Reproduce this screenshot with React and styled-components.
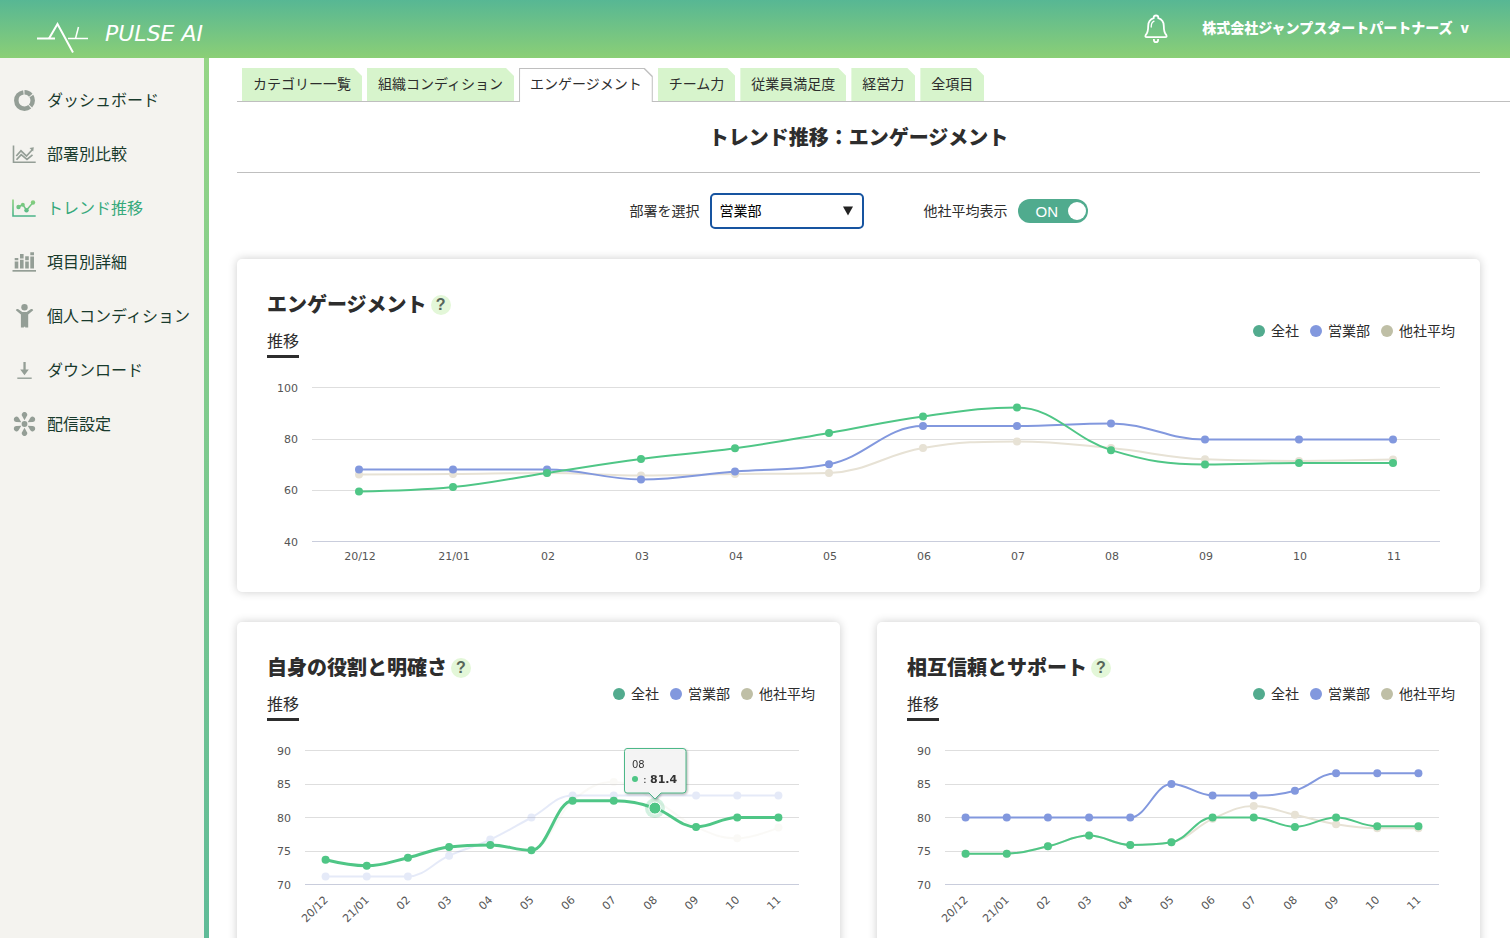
import React, { useLayoutEffect, useRef, useState } from "react";
import styled, { createGlobalStyle, css } from "styled-components";

const months = ["20/12", "21/01", "02", "03", "04", "05", "06", "07", "08", "09", "10", "11"];

const seriesColors = {
  average: "#e7e2d5",
  department: "#8298de",
  company: "#4fc686",
};

const legendItems = [
  { label: "全社", color: "#52ab8e" },
  { label: "営業部", color: "#8298de" },
  { label: "他社平均", color: "#bfbfa6" },
];

const engagement = {
  average: [66.1, 66.3, 66.7, 65.7, 66.3, 66.7, 76.4, 79, 76.4, 72, 71.4, 71.9],
  department: [68.1, 68.1, 68.1, 64.2, 67.3, 70.1, 85, 85, 86, 79.7, 79.7, 79.7],
  company: [59.5, 61.2, 66.7, 72.1, 76.3, 82.3, 88.7, 92.2, 75.6, 70, 70.6, 70.6],
};

const roleClarity = {
  average: [73.7, 72.8, 74, 75.6, 75.9, 75.1, 82.5, 85.3, 82.6, 78.6, 76.9, 78.5],
  department: [71.2, 71.2, 71.2, 74.3, 76.7, 80, 83.3, 83.3, 83.3, 83.3, 83.3, 83.3],
  company: [73.7, 72.8, 74, 75.6, 75.9, 75.1, 82.5, 82.5, 81.4, 78.6, 80, 80],
};

const mutualTrust = {
  average: [74.6, 74.6, 75.7, 77.3, 75.9, 76.3, 79.8, 81.7, 80.4, 79, 78.4, 78.4],
  department: [80, 80, 80, 80, 80, 85, 83.3, 83.3, 84, 86.6, 86.6, 86.6],
  company: [74.6, 74.6, 75.7, 77.3, 75.9, 76.3, 80, 80, 78.6, 80, 78.7, 78.7],
};

const tabs = [
  "カテゴリー一覧",
  "組織コンディション",
  "エンゲージメント",
  "チーム力",
  "従業員満足度",
  "経営力",
  "全項目",
];

// smooth curve that never overshoots a local maximum or minimum
const splinePath = (points) => {
  let d = `M${points[0].x} ${points[0].y}`;
  let prevRight = points[0];
  for (let i = 1; i < points.length; i++) {
    const last = points[i - 1];
    const point = points[i];
    const next = points[i + 1];
    let left = point;
    let right = point;
    if (next) {
      const leftX = (1.5 * point.x + last.x) / 2.5;
      let leftY = (1.5 * point.y + last.y) / 2.5;
      const rightX = (1.5 * point.x + next.x) / 2.5;
      let rightY = (1.5 * point.y + next.y) / 2.5;
      const correction =
        ((rightY - leftY) * (rightX - point.x)) / (rightX - leftX) + point.y - rightY;
      leftY += correction;
      rightY += correction;
      if (leftY > last.y && leftY > point.y) {
        leftY = Math.max(last.y, point.y);
        rightY = 2 * point.y - leftY;
      } else if (leftY < last.y && leftY < point.y) {
        leftY = Math.min(last.y, point.y);
        rightY = 2 * point.y - leftY;
      }
      if (rightY > next.y && rightY > point.y) {
        rightY = Math.max(next.y, point.y);
        leftY = 2 * point.y - rightY;
      } else if (rightY < next.y && rightY < point.y) {
        rightY = Math.min(next.y, point.y);
        leftY = 2 * point.y - rightY;
      }
      left = { x: leftX, y: leftY };
      right = { x: rightX, y: rightY };
    }
    d += ` C${prevRight.x} ${prevRight.y} ${left.x} ${left.y} ${point.x} ${point.y}`;
    prevRight = right;
  }
  return d;
};

const TrendChart = ({ data, min, max, step, plotHeight, plotLeft, rotated, active }) => {
  const ref = useRef(null);
  const [width, setWidth] = useState(500);

  useLayoutEffect(() => {
    const update = () => setWidth(ref.current.clientWidth);
    update();
    const observer = new ResizeObserver(update);
    observer.observe(ref.current);
    return () => observer.disconnect();
  }, []);

  const top = 19.5;
  const bottom = top + plotHeight;
  const plotRight = width - (rotated ? 11 : 10);
  const slot = (plotRight - plotLeft) / months.length;
  const xOf = (i) => plotLeft + slot * (i + 0.5);
  const yOf = (v) => bottom - ((v - min) / (max - min)) * plotHeight;
  const ticks = [];
  for (let v = min; v <= max; v += step) ticks.push(v);

  const hoverX = active ? xOf(active.index) : 0;
  const hoverY = active ? yOf(data[active.series][active.index]) : 0;

  return (
    <ChartBox ref={ref}>
      <ChartSvg viewBox={`0 0 ${width} 204`} width={width} height={204}>
        {ticks.map((v) => {
          const y = Math.round(yOf(v) - 0.01) + 0.5;
          return (
            <g key={v}>
              <path
                d={`M${plotLeft} ${y}H${plotRight}`}
                stroke={v === min ? "#c9cddc" : "#dedede"}
              />
              <AxisText x={plotLeft - 14} y={yOf(v) + 4} textAnchor="end">
                {v}
              </AxisText>
            </g>
          );
        })}
        {months.map((m, i) =>
          rotated ? (
            <AxisText
              key={m}
              textAnchor="end"
              transform={`translate(${xOf(i) + 3} ${bottom + 16}) rotate(-45)`}
            >
              {m}
            </AxisText>
          ) : (
            <AxisText key={m} x={xOf(i) + 1} y={bottom + 18} textAnchor="middle">
              {m}
            </AxisText>
          )
        )}
        {Object.keys(seriesColors).map((name) => {
          const points = data[name].map((v, i) => ({ x: xOf(i), y: yOf(v) }));
          const highlighted = active && active.series === name;
          return (
            <g key={name} opacity={active && !highlighted ? 0.2 : 1}>
              <path
                d={splinePath(points)}
                fill="none"
                stroke={seriesColors[name]}
                strokeWidth={highlighted ? 3 : 2}
                strokeLinecap="round"
              />
              {points.map((p, i) => (
                <circle key={i} cx={p.x} cy={p.y} r="4" fill={seriesColors[name]} />
              ))}
            </g>
          );
        })}
        {active && (
          <g>
            <circle cx={hoverX} cy={hoverY} r="10" fill="#4fc686" opacity="0.25" />
            <circle cx={hoverX} cy={hoverY} r="6" fill="#4fc686" stroke="#fff" />
            <Tooltip transform={`translate(${Math.round(hoverX) - 31} ${Math.round(hoverY) - 60})`}>
              <path
                d="M3 .5H59Q62 .5 62 3.500V42Q62 45 59 45H37L31 51L25 45H3Q.5 45 .5 42V3.500Q.5 .5 3 .5Z"
                fill="#f7f7f7"
                fillOpacity="0.95"
                stroke="#4cb888"
              />
              <AxisText x="8" y="20" $dark>
                {months[active.index]}
              </AxisText>
              <circle cx="11" cy="31" r="3" fill="#4fc686" />
              <TipText x="19" y="35">
                :
              </TipText>
              <TipText x="26" y="35" $bold>
                {data[active.series][active.index]}
              </TipText>
            </Tooltip>
          </g>
        )}
      </ChartSvg>
    </ChartBox>
  );
};

const ChartCard = ({ title, ...chart }) => (
  <Card>
    <CardTitle>
      {title}
      <HelpButton type="button" aria-label="ヘルプ">
        ?
      </HelpButton>
    </CardTitle>
    <CardBar>
      <SubTitle>推移</SubTitle>
      <Legend>
        {legendItems.map((item) => (
          <LegendItem key={item.label}>
            <LegendDot $color={item.color} />
            {item.label}
          </LegendItem>
        ))}
      </Legend>
    </CardBar>
    <TrendChart {...chart} />
  </Card>
);

const DonutIcon = () => (
  <Icon viewBox="0 0 24 24">
    <g fill="none" stroke="currentColor" strokeWidth="4.500" transform="rotate(-90 12.500 12.500)">
      <circle cx="12.500" cy="12.500" r="8.200" pathLength="360" strokeDasharray="50 310" />
      <circle
        cx="12.500"
        cy="12.500"
        r="8.200"
        pathLength="360"
        strokeDasharray="76 284"
        strokeDashoffset="-57"
      />
      <circle
        cx="12.500"
        cy="12.500"
        r="8.200"
        pathLength="360"
        strokeDasharray="212 148"
        strokeDashoffset="-140"
      />
    </g>
  </Icon>
);

const CompareIcon = () => (
  <Icon viewBox="0 0 24 24" fill="none" stroke="currentColor">
    <path d="M1.500 3.500V20.300H23.700" strokeWidth="1.600" />
    <path d="M4.300 14L9 8.800L14.500 14L20.500 7.500" strokeWidth="1.700" />
    <path d="M4.500 17.800L9.200 12.600L15 17.300L20.500 12.800" strokeWidth="1.700" />
    <path d="M17.500 6L21.800 5.300L21.200 9.500Z" fill="currentColor" stroke="none" />
  </Icon>
);

const TrendIcon = () => (
  <Icon viewBox="0 0 24 24" fill="none">
    <defs>
      <linearGradient id="trend" x1="0" y1="3" x2="0" y2="21" gradientUnits="userSpaceOnUse">
        <stop offset="0" stopColor="#8ed27c" />
        <stop offset="1" stopColor="#47b28a" />
      </linearGradient>
    </defs>
    <g stroke="url(#trend)">
      <path d="M1 3.500V20H23.700" strokeWidth="1.600" />
      <path d="M6.500 11L10.800 8.500L14.500 14.200L21 6.500" strokeWidth="1.500" />
    </g>
    <g fill="url(#trend)">
      <circle cx="6.500" cy="11" r="2.200" />
      <circle cx="10.800" cy="8.800" r="2" />
      <circle cx="14.500" cy="14.200" r="2.200" />
      <circle cx="21" cy="6.500" r="2.200" />
    </g>
  </Icon>
);

const BarsIcon = () => (
  <Icon viewBox="0 0 24 24" fill="currentColor">
    <path d="M.5 20H24V21.700H.5Z" />
    <path d="M2.700 8H6.300V10.300H2.700ZM2.700 11.500H6.300V18.500H2.700Z" />
    <path d="M8 4H11.600V8.400H8ZM8 9.700H11.600V18.500H8Z" />
    <path d="M13.200 6.200H16.800V10.300H13.200ZM13.200 11.500H16.800V18.500H13.200Z" />
    <path d="M18.300 2.200H22V5.200H18.300ZM18.300 6.500H22V18.500H18.300Z" />
  </Icon>
);

const PersonIcon = () => (
  <Icon viewBox="0 0 24 24" fill="currentColor">
    <circle cx="12.500" cy="3.200" r="3.200" />
    <path d="M3.900 6.300Q4.300 4.500 6 5.100L10.300 8H14.700L19 5.100Q20.700 4.500 21.200 6.300L16.200 10.600V23.500H13.200V22.800H11.900V23.500H8.900V10.600Z" />
  </Icon>
);

const DownloadIcon = () => (
  <Icon viewBox="0 0 24 24" fill="currentColor">
    <path d="M11.400 4H13.700V11.500H16.800L12.500 17.300L8.200 11.500H11.400Z" />
    <path d="M5.300 19.500H19.700V20.900H5.300Z" />
  </Icon>
);

const NetworkIcon = () => (
  <Icon viewBox="0 0 24 24" fill="currentColor">
    <circle cx="12.500" cy="12" r="2.900" />
    {[0, 60, 120, 180, 240, 300].map((a) => (
      <path
        key={a}
        d="M12.500 8.300L10.300 4.300A2.700 2.700 0 1 1 14.700 4.300Z"
        transform={`rotate(${a} 12.500 12)`}
      />
    ))}
  </Icon>
);

const menu = [
  { label: "ダッシュボード", icon: DonutIcon },
  { label: "部署別比較", icon: CompareIcon },
  { label: "トレンド推移", icon: TrendIcon, active: true },
  { label: "項目別詳細", icon: BarsIcon },
  { label: "個人コンディション", icon: PersonIcon },
  { label: "ダウンロード", icon: DownloadIcon },
  { label: "配信設定", icon: NetworkIcon },
];

const App = () => {
  const [tab, setTab] = useState("エンゲージメント");
  const [department, setDepartment] = useState("営業部");
  const [showAverage, setShowAverage] = useState(true);

  return (
    <Shell>
      <GlobalStyle />
      <Header>
        <Brand href="#">
          <BrandMark viewBox="0 0 52 32" fill="none" stroke="#fff">
            <path d="M0 16.500H18" strokeWidth="2" />
            <path d="M12 16.500L20.500 2L36 30.500" strokeWidth="2" />
            <path d="M31 16.500H51" strokeWidth="1.500" />
            <path d="M38.500 16.500L41.500 5" strokeWidth="1.500" />
          </BrandMark>
          <BrandName>PULSE AI</BrandName>
        </Brand>
        <HeaderRight>
          <BellButton type="button" aria-label="通知">
            <svg width="24" height="30" viewBox="0 0 24 30" fill="none" stroke="#fff">
              <path
                d="M9.700 4.200V3.500Q9.700 1.500 12 1.500T14.300 3.500V4.200Q19.800 6 19.800 12Q19.800 18.500 22.300 21Q23.300 23.200 21.300 23.200H2.700Q.7 23.200 1.700 21Q4.200 18.500 4.200 12Q4.200 6 9.700 4.200Z"
                strokeWidth="1.800"
              />
              <path d="M7.200 13Q7.200 8.500 10 7.200" strokeWidth="1.300" strokeLinecap="round" />
              <path d="M9.900 25V26Q9.900 28.200 12 28.200T14.100 26V25" strokeWidth="1.800" />
            </svg>
          </BellButton>
          <AccountButton type="button">
            <span>株式会社ジャンプスタートパートナーズ</span>
            <span>v</span>
          </AccountButton>
        </HeaderRight>
      </Header>
      <Body>
        <Sidebar>
          {menu.map(({ label, icon: MenuIcon, active }) => (
            <MenuLink key={label} href="#" $active={active}>
              <MenuIcon />
              <MenuLabel>{label}</MenuLabel>
            </MenuLink>
          ))}
        </Sidebar>
        <Main>
          <TabBar role="tablist">
            {tabs.map((name) => (
              <Tab
                key={name}
                type="button"
                role="tab"
                aria-selected={name === tab}
                $active={name === tab}
                onClick={() => setTab(name)}
              >
                {name}
              </Tab>
            ))}
          </TabBar>
          <Content>
            <PageTitle>トレンド推移：エンゲージメント</PageTitle>
            <Filters>
              <Field>
                <FieldLabel htmlFor="department">部署を選択</FieldLabel>
                <SelectBox>
                  <Select
                    id="department"
                    value={department}
                    onChange={(e) => setDepartment(e.target.value)}
                  >
                    <option>営業部</option>
                    <option>開発部</option>
                    <option>人事部</option>
                  </Select>
                  <SelectArrow viewBox="0 0 10 10">
                    <path d="M0 .5H10L5 9.500Z" fill="#222" />
                  </SelectArrow>
                </SelectBox>
              </Field>
              <Field>
                <FieldLabel htmlFor="average">他社平均表示</FieldLabel>
                <Toggle $on={showAverage}>
                  <ToggleInput
                    id="average"
                    type="checkbox"
                    checked={showAverage}
                    onChange={(e) => setShowAverage(e.target.checked)}
                  />
                  <span>{showAverage ? "ON" : "OFF"}</span>
                  <Knob />
                </Toggle>
              </Field>
            </Filters>
            <ChartCard
              title="エンゲージメント"
              data={engagement}
              min={40}
              max={100}
              step={20}
              plotHeight={154}
              plotLeft={45}
            />
            <CardGrid>
              <ChartCard
                title="自身の役割と明確さ"
                data={roleClarity}
                min={70}
                max={90}
                step={5}
                plotHeight={134}
                plotLeft={38}
                rotated
                active={{ series: "company", index: 8 }}
              />
              <ChartCard
                title="相互信頼とサポート"
                data={mutualTrust}
                min={70}
                max={90}
                step={5}
                plotHeight={134}
                plotLeft={38}
                rotated
              />
            </CardGrid>
          </Content>
        </Main>
      </Body>
    </Shell>
  );
};

const GlobalStyle = createGlobalStyle`
  *, *::before, *::after {
    box-sizing: border-box;
  }
  body {
    margin: 0;
    background: #fff;
    color: #2d2d2d;
    font-family: "Noto Sans CJK JP", sans-serif;
    font-size: 14px;
  }
  button, select, input {
    font: inherit;
    color: inherit;
  }
`;

const Shell = styled.div`
  display: flex;
  flex-direction: column;
  height: 100vh;
`;

const Header = styled.header`
  display: flex;
  flex: none;
  align-items: center;
  justify-content: space-between;
  height: 58px;
  padding: 0 41px 0 37px;
  background: linear-gradient(#57b794, #8bcf76);
`;

const Brand = styled.a`
  display: flex;
  align-items: center;
  gap: 16px;
  padding-top: 18px;
  color: #fff;
  text-decoration: none;
`;

const BrandMark = styled.svg`
  width: 52px;
  height: 32px;
`;

const BrandName = styled.span`
  font-family: "DejaVu Sans", sans-serif;
  font-size: 22px;
  font-style: italic;
  line-height: 20px;
  padding-bottom: 8px;
`;

const HeaderRight = styled.div`
  display: flex;
  align-items: center;
  gap: 34px;
`;

const BellButton = styled.button`
  display: flex;
  padding: 0;
  border: 0;
  background: none;
`;

const AccountButton = styled.button`
  display: flex;
  gap: 8px;
  padding: 0 0 4px;
  border: 0;
  background: none;
  color: #fff;
  font-weight: 900;
  line-height: 20px;
`;

const Body = styled.div`
  display: flex;
  flex: 1;
  min-height: 0;
`;

const Sidebar = styled.nav`
  flex: none;
  width: 209px;
  padding-top: 15px;
  border-right: 5px solid;
  border-image: linear-gradient(#95d586, #5fbb98) 1;
  background: #f4f3ef;
`;

const MenuLink = styled.a`
  display: flex;
  align-items: center;
  gap: 11px;
  height: 54px;
  padding-left: 12px;
  color: ${(props) => (props.$active ? "#36a97c" : "#183a2c")};
  font-size: 16px;
  text-decoration: none;
  white-space: nowrap;

  svg {
    color: #949e96;
  }
`;

const MenuLabel = styled.span`
  padding-bottom: 2px;
`;

const Icon = styled.svg`
  flex: none;
  width: 24px;
  height: 24px;
`;

const Main = styled.main`
  flex: 1;
  min-width: 0;
  padding: 10px 0 0 28px;
  overflow-y: auto;
  scrollbar-width: none;
`;

const TabBar = styled.div`
  display: flex;
  gap: 5px;
  height: 34px;
  padding-left: 5px;
  border-bottom: 1px solid #bfbfbf;
`;

const cutCorner = "polygon(0 0, calc(100% - 8px) 0, 100% 8px, 100% 100%, 0 100%)";

const Tab = styled.button`
  position: relative;
  height: 33px;
  padding: 0 11px 3px;
  border: 0;
  background: #d7f4cc;
  clip-path: ${cutCorner};
  line-height: 20px;
  white-space: nowrap;

  ${(props) =>
    props.$active &&
    css`
      height: 34px;
      padding-bottom: 4px;
      background: #bfbfbf;
      z-index: 0;

      &::before {
        content: "";
        position: absolute;
        z-index: -1;
        inset: 1px 1px 0 1px;
        background: #fff;
        clip-path: ${cutCorner};
      }
    `}
`;

const Content = styled.div`
  padding: 0 30px 30px 0;
`;

const PageTitle = styled.h1`
  margin: 0;
  border-bottom: 1px solid #bfbfbf;
  font-size: 20px;
  font-weight: 900;
  line-height: 70px;
  text-align: center;
`;

const Filters = styled.div`
  display: flex;
  justify-content: center;
  gap: 60px;
  padding: 20px 0 30px;
`;

const Field = styled.div`
  display: flex;
  align-items: center;
  gap: 10px;
`;

const FieldLabel = styled.label`
  padding-bottom: 2px;
`;

const SelectBox = styled.div`
  position: relative;
`;

const Select = styled.select`
  display: block;
  width: 154px;
  height: 36px;
  padding: 0 8px 2px;
  appearance: none;
  border: 2px solid #1754a0;
  border-radius: 5px;
  outline: 0;
  background: #fff;
  color: #000;
`;

const SelectArrow = styled.svg`
  position: absolute;
  top: 13px;
  right: 11px;
  width: 10px;
  height: 10px;
  pointer-events: none;
`;

const Toggle = styled.span`
  position: relative;
  display: flex;
  align-items: center;
  justify-content: space-between;
  width: 70px;
  height: 24px;
  padding: 0 2px 0 18px;
  border-radius: 12px;
  background: ${(props) => (props.$on ? "#50ab8e" : "#b5b5b5")};
  color: #fff;
  font-family: "Liberation Sans", sans-serif;
  font-size: 15px;
`;

const ToggleInput = styled.input`
  position: absolute;
  inset: 0;
  width: 100%;
  height: 100%;
  margin: 0;
  opacity: 0;
`;

const Knob = styled.span`
  width: 18px;
  height: 18px;
  border-radius: 50%;
  background: #fff;
`;

const CardGrid = styled.div`
  display: grid;
  grid-template-columns: 1fr 1fr;
  gap: 37px;
  margin-top: 30px;
`;

const Card = styled.section`
  min-width: 0;
  padding: 30px 30px 20px;
  border-radius: 5px;
  background: #fff;
  box-shadow: 0 0 10px rgba(0, 0, 0, 0.2);
`;

const CardTitle = styled.h2`
  display: flex;
  align-items: center;
  gap: 4px;
  margin: 0;
  font-size: 20px;
  font-weight: 900;
  line-height: 30px;
`;

const HelpButton = styled.button`
  width: 20px;
  height: 20px;
  margin-top: 2px;
  padding: 0;
  border: 0;
  border-radius: 50%;
  background: #e3f7d8;
  color: #56655a;
  font-family: "Liberation Sans", sans-serif;
  font-size: 16px;
  font-weight: 700;
  line-height: 20px;
`;

const CardBar = styled.div`
  display: flex;
  align-items: flex-start;
  justify-content: space-between;
  margin: 2px -5px 10px 0;
`;

const SubTitle = styled.h3`
  margin: 8px 0 0;
  padding-bottom: 4px;
  border-bottom: 3px solid #2d2d2d;
  font-size: 16px;
  font-weight: 400;
  line-height: 22px;
`;

const Legend = styled.ul`
  display: flex;
  gap: 11px;
  margin: 0;
  padding: 0;
  list-style: none;
`;

const LegendItem = styled.li`
  display: flex;
  align-items: center;
  gap: 6px;
  line-height: 18px;
`;

const LegendDot = styled.span`
  width: 12px;
  height: 12px;
  margin-top: 2px;
  border-radius: 50%;
  background: ${(props) => props.$color};
`;

const ChartBox = styled.div`
  height: 204px;
`;

const ChartSvg = styled.svg`
  display: block;
  overflow: visible;
`;

const AxisText = styled.text`
  fill: ${(props) => (props.$dark ? "#333" : "#555")};
  font-family: "DejaVu Sans", sans-serif;
  font-size: ${(props) => (props.$dark ? "10px" : "11px")};
`;

const TipText = styled.text`
  fill: #333;
  font-family: "DejaVu Sans", sans-serif;
  font-size: 11px;
  font-weight: ${(props) => (props.$bold ? 700 : 400)};
`;

const Tooltip = styled.g`
  filter: drop-shadow(1px 1px 1px rgba(0, 0, 0, 0.3));
`;

export default App;
